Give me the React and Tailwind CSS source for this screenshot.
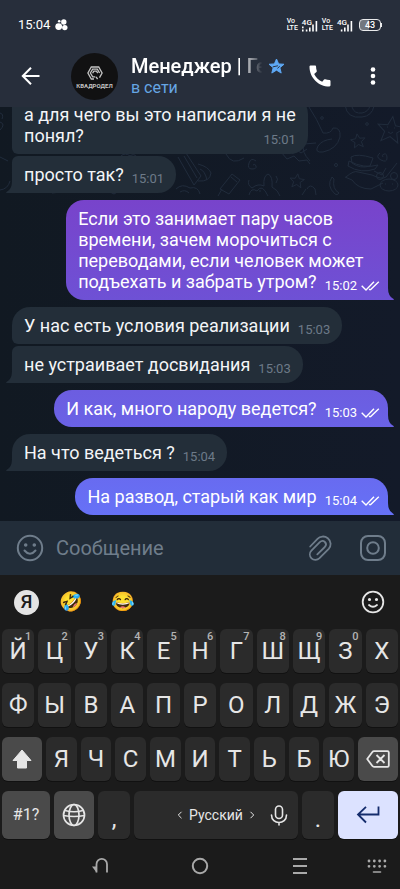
import { MdCall } from "react-icons/md";

const MESSAGES = [
  { id: 1, text: "а для чего вы это написали я не\nпонял?", time: "15:01", first: false, last: false },
  { id: 2, text: "просто так?", time: "15:01", first: false, last: true },
  {
    id: 3,
    text: "Если это занимает пару часов\nвремени, зачем морочиться с\nпереводами, если человек может\nподъехать и забрать утром?",
    time: "15:02",
    own: true,
    fill: "bg-linear-to-b from-[#7843cb] to-[#6e51d5]",
    tail: "text-[#6e51d5]"
  },
  { id: 4, text: "У нас есть условия реализации", time: "15:03", first: true, last: false },
  { id: 5, text: "не устраивает досвидания", time: "15:03", first: false, last: true },
  {
    id: 6,
    text: "И как, много народу ведется?",
    time: "15:03",
    own: true,
    fill: "bg-linear-to-b from-[#6c5de0] to-[#6a62e6]",
    tail: "text-[#6a62e6]"
  },
  { id: 7, text: "На что ведеться ?", time: "15:04", first: true, last: true },
  {
    id: 8,
    text: "На развод, старый как мир",
    time: "15:04",
    own: true,
    fill: "bg-linear-to-b from-[#686bf0] to-[#6671f7]",
    tail: "text-[#6671f7]"
  }
];

const TOP_ROW = [
  ["Й", "1"],
  ["Ц", "2"],
  ["У", "3"],
  ["К", "4"],
  ["Е", "5"],
  ["Н", "6"],
  ["Г", "7"],
  ["Ш", "8"],
  ["Щ", "9"],
  ["З", "0"],
  ["Х", ""]
];
const HOME_ROW = ["Ф", "Ы", "В", "А", "П", "Р", "О", "Л", "Д", "Ж", "Э"];
const BOTTOM_ROW = ["Я", "Ч", "С", "М", "И", "Т", "Ь", "Б", "Ю"];

const STAR = "M0 -8 L2.3 -2.8 L8 -2.4 L3.6 1.3 L5 7 L0 3.9 L-5 7 L-3.6 1.3 L-8 -2.4 L-2.3 -2.8 Z";

function Signal({ dotted }) {
  return (
    <div className="relative h-4 w-4">
      <span className="absolute left-0 top-[2px] text-[8px] font-medium leading-[7px]">4G</span>
      <svg viewBox="0 0 16 16" className="h-4 w-4" fill="currentColor">
        {dotted ? <path d="M0 9.500h1.600v1.800H0zM0 12.600h1.600v1.800H0z" /> : null}
        <path d="M3.800 12.500h1.600v2H3.800zM7 10.500h1.600v4H7zM10.200 7.500h1.600v7h-1.600zM13.600 4h1.600v10.500h-1.600z" />
      </svg>
    </div>
  );
}

function VoLte() {
  return (
    <div className="text-[7px] font-medium leading-[7px]">
      Vo
      <br />
      LTE
    </div>
  );
}

function StatusBar() {
  return (
    <div className="flex h-[50px] items-center pl-[18px] pr-[18px] text-white">
      <span className="text-[13px] leading-4">15:04</span>
      <svg viewBox="0 0 13 12" className="ml-[5px] h-3 w-[13px]" fill="currentColor">
        <circle cx="3.7" cy="7.6" r="3.4" />
        <circle cx="8.8" cy="3" r="2.7" />
        <circle cx="9.8" cy="8.6" r="2.7" />
        <circle cx="4.2" cy="2.2" r="1.3" />
      </svg>
      <div className="ml-auto flex items-center gap-1">
        <VoLte />
        <Signal dotted />
        <VoLte />
        <Signal />
        <div className="ml-[2px] flex items-center">
          <div className="relative h-3 w-[22px] overflow-hidden rounded-[4px] border border-white/90">
            <div className="h-full w-[43%] bg-white/35" />
            <span className="absolute inset-0 text-center text-[9px] font-medium leading-[10px]">43</span>
          </div>
          <div className="h-1 w-px bg-white/90" />
        </div>
      </div>
    </div>
  );
}

function ChatHeader() {
  return (
    <div className="flex h-[57px] items-center pb-[5px] text-white">
      <button type="button" aria-label="Назад" className="flex w-[71px] justify-start pl-[21px]">
        <svg viewBox="0 0 20 20" className="size-5" fill="none" stroke="currentColor" strokeWidth="2">
          <path d="M18.500 10H2M10 1.800 1.800 10l8.200 8.200" />
        </svg>
      </button>
      <div className="flex size-[47px] shrink-0 flex-col items-center justify-center rounded-full bg-[#111112] text-[#c4c4c4]">
        <svg viewBox="0 0 16 14" className="mt-[2px] h-[14px] w-4" fill="none" stroke="currentColor" strokeWidth="1.300">
          <path d="M7 13H4.300L.9 7 4.300 1h7.400l3.400 6-2.600 4.600" />
          <path d="M12.600 7 10.300 3.200H5.700L3.400 7l2.300 3.800h2.600M10.800 7.200 9.400 5.100H6.800L5.600 7.200" />
          <path d="M9 10.800 10.600 13" />
        </svg>
        <span className="mt-[3px] text-[6px] font-bold leading-[6px]">КВАДРОДЕЛ</span>
      </div>
      <div className="ml-[13px] w-[154px] shrink-0">
        <div className="flex items-center">
          <h1 className="w-[134px] whitespace-nowrap text-[20px] font-medium leading-6 [mask-image:linear-gradient(to_right,#000_82%,transparent_98%)]">
            Менеджер | Ге
          </h1>
          <svg viewBox="-8 -8 16 16" className="ml-1 size-[15px] shrink-0">
            <path d={STAR} fill="#5ea9f5" stroke="#5ea9f5" strokeLinejoin="round" />
            <path d="M-4 .4 L1.500 -.8 M1 2 L3.400 -.2" stroke="#272e3b" strokeWidth="1" />
          </svg>
        </div>
        <p className="text-base leading-5 text-[#66a6e4]">в сети</p>
      </div>
      <button type="button" aria-label="Позвонить" className="ml-auto flex w-10 justify-center">
        <MdCall className="size-7" />
      </button>
      <button type="button" aria-label="Меню" className="ml-[6px] flex w-[54px] justify-center">
        <svg viewBox="0 0 6 18" className="h-[18px] w-[6px]" fill="currentColor">
          <circle cx="3" cy="2.500" r="2.300" />
          <circle cx="3" cy="9" r="2.300" />
          <circle cx="3" cy="15.500" r="2.300" />
        </svg>
      </button>
    </div>
  );
}

function Wallpaper() {
  return (
    <svg
      viewBox="0 0 400 89"
      className="absolute right-0 top-0 h-[89px] w-[400px]"
      fill="none"
      stroke="#212c3c"
      strokeWidth="1"
      aria-hidden="true"
    >
      <path d={STAR} transform="translate(391 23) rotate(8) scale(1.7)" strokeWidth=".6" />
      <path d="M387 20h1M394 21h1M388 25q3 3 5 0" />
      <path d={STAR} transform="translate(358 34) rotate(-8) scale(.9)" />
      <path d={STAR} transform="translate(297 74) rotate(6) scale(.9)" />
      <circle cx="322" cy="11" r="1.3" />
      <circle cx="367" cy="17" r="1.3" />
      <circle cx="336" cy="58" r="1.5" />
      <path d="M253 58q2-2 3 1t-4 3-3-6 7-2M383 50q-2-2 1-3t3 4-6 2-1-7" />
      <path d="M345-2q2 14 17 12 10-1 12-11M352 0q2 7 10 6 6-1 8-7" />
      <path d="M309 0q8 12 14 26 8 1 10-5 8-1 7 9-3 12-17 15-9 1-5-6 4-6 14-7M316 36l-12 1q-3 8 6 17M281 45l6 7 7-3 5 5 8-1 3 4M292 47l5-4 4 3 6-4" />
      <path d="M351 50q6-4 22 1l-3 8q-10 3-18-3zM348 59q13 8 27 3l3-4q-14 4-29-4zM346 70q8-7 12-5l14 3q10 5 14 2l11-14M345 70l7 3q6 9 19 9l12-6M374 64l8 4 4-7" />
      <ellipse cx="389" cy="78" rx="9" ry="6" />
      <circle cx="380" cy="69" r="3.500" />
      <circle cx="394" cy="69" r="3.500" />
      <path d="M385 77h1M392 77h1" />
      <path d="M332 70q-6 9 3 17 2 2 4-1-7-4-5-14zM307 82q3-6 8 0l1 6M302 88l4-6" />
      <path d="M249 73q-2 5 3 8 6-5 12-2-1-10 4-12 5 2 4 13 6 3 8 9M276 69q3 3 0 7M249 88q2-8 8-4 5-8 11 5M259 84h2" />
      <path d="M232 67l8 6-11 14-9-5zM218 89l4-7M231 70l6 5" />
      <path d="M198 57q11 3 13 9-1 9-13 8M200 62q5 2 7 11M226 47q6 12 18 4M219 38l8 6 12-4" />
      <path d="M0 15q6 2 0 8M0 6q4 1 2 6M0 50l8 4M10 74q-2 8-10 9" />
      <path d="M178 50l16 28 7-9-15-23M184 49l13 22M176 82q6-6 14-1 8-2 10 6M180 85q5-3 9 1M43 83l5-4 4 7 9-1M75 84q6-8 14 0M108 84l6 3 8-5M121 49q4-4 9 0 4-3 7 1" />
    </svg>
  );
}

function Tail({ own, className }) {
  return (
    <svg
      viewBox="0 0 7 12"
      className={`absolute bottom-0 h-3 w-[7px] ${own ? "-right-[6px] -scale-x-100" : "-left-[6px]"} ${className}`}
      fill="currentColor"
    >
      <path d="M6 0h1v12H.6Q-.4 11.400 .8 10.800 6 8 6 0Z" />
    </svg>
  );
}

function ReadMark() {
  return (
    <svg viewBox="0 0 19 10" className="ml-1 h-[10px] w-[19px]" fill="none" stroke="currentColor" strokeWidth="1.400">
      <path d="M.7 4.800 5 9 13 .8M9.200 9 17.800 .8M8.200 8l1 1" />
    </svg>
  );
}

function Bubble({ message }) {
  const { text, time, own, first, last, fill, tail } = message;

  const shape = own
    ? `self-end rounded-[18px] rounded-br-none pl-3 pr-2 text-white ${fill}`
    : `self-start rounded-r-[18px] bg-[#232e39] px-3 text-[#f3f5f7] ${first ? "rounded-tl-[18px]" : "rounded-tl-md"} ${
        last ? "rounded-bl-none" : "rounded-bl-md"
      }`;

  return (
    <div className={`relative py-2 ${shape} ${!own && !last ? "mb-[2px]" : "mb-[7px] last:mb-0"}`}>
      <p className="whitespace-pre-line text-[18px] leading-[21px]">
        {text}
        <span
          className={`float-right ml-2 mt-[9px] flex h-3 items-center text-[13px] leading-3 ${
            own ? "text-white" : "text-[#6d7a88]"
          }`}
        >
          {time}
          {own ? <ReadMark /> : null}
        </span>
      </p>
      {own || last ? <Tail own={own} className={own ? tail : "text-[#232e39]"} /> : null}
    </div>
  );
}

function Composer() {
  return (
    <div className="flex h-[54px] shrink-0 items-center bg-[#222d39] pl-4 pr-[13px] text-[#6f7d8b]">
      <button type="button" aria-label="Эмодзи">
        <svg viewBox="0 0 28 28" className="size-7" fill="none" stroke="currentColor" strokeWidth="2" strokeLinecap="round">
          <circle cx="14" cy="14" r="12.200" />
          <path d="M8.500 16.500q5.500 6.500 11 0" />
          <circle cx="9.700" cy="11" r=".8" fill="currentColor" />
          <circle cx="18.300" cy="11" r=".8" fill="currentColor" />
        </svg>
      </button>
      <input
        type="text"
        aria-label="Сообщение"
        placeholder="Сообщение"
        className="ml-3 min-w-0 flex-1 bg-transparent text-[20px] leading-6 text-white outline-none placeholder:text-[#6f7d8b]"
      />
      <button type="button" aria-label="Прикрепить файл">
        <svg viewBox="0 0 24 26" className="h-[26px] w-6" fill="none" stroke="currentColor" strokeWidth="1.800" strokeLinecap="round">
          <path d="M2.200 11.500 9.500 3.800C12 1.200 16.500.6 19.800 3.200 23.500 6.300 23.300 11 20.700 13.800L11.500 23.200C9.300 25.300 5.700 25.500 3.500 23.300 1.300 21.100 1.400 17.800 3.400 15.700L11.800 7.200C13.300 5.700 15.500 5.700 16.900 7 18.300 8.400 18.200 10.500 16.800 12L9.300 19.400" />
        </svg>
      </button>
      <button type="button" aria-label="Камера" className="ml-[27px]">
        <svg viewBox="0 0 28 28" className="size-7" fill="none" stroke="currentColor" strokeWidth="2">
          <rect x="2" y="2" width="24" height="24" rx="7" />
          <circle cx="14" cy="14" r="5.800" />
        </svg>
      </button>
    </div>
  );
}

function Key({ className = "", tone = "bg-[#2b2b2b]", label, children }) {
  return (
    <button
      type="button"
      aria-label={label}
      className={`relative flex h-full min-w-0 items-center justify-center rounded-md text-[#e6e6e6] shadow-[0_1px_0_#111111] ${tone} ${className}`}
    >
      {children}
    </button>
  );
}

function LetterKey({ letter, hint }) {
  return (
    <Key className="flex-1 text-2xl">
      {letter}
      {hint ? (
        <span className="absolute right-[3px] top-[2px] text-[11px] font-medium leading-3 text-[#b4b4b4]">{hint}</span>
      ) : null}
    </Key>
  );
}

function Keyboard() {
  return (
    <div className="shrink-0 bg-[#1b1b1b]">
      <div className="flex h-[54px] items-center pl-[14px] pr-[15px]">
        <button
          type="button"
          className="flex size-[25px] items-center justify-center rounded-full bg-[#e4e4e4] text-[19px] font-medium leading-5 text-[#1b1b1b]"
        >
          Я
        </button>
        <button type="button" className="ml-[18px] w-7 text-center font-['Noto_Color_Emoji',sans-serif] text-[19px] leading-6">
          🤣
        </button>
        <button type="button" className="ml-6 w-7 text-center font-['Noto_Color_Emoji',sans-serif] text-[19px] leading-6">
          😂
        </button>
        <button type="button" aria-label="Смайлы" className="ml-auto text-[#e6e6e6]">
          <svg viewBox="0 0 24 24" className="size-6" fill="none" stroke="currentColor" strokeWidth="1.800" strokeLinecap="round">
            <circle cx="12" cy="12" r="10.300" />
            <path d="M8 15q4 3.600 8 0" />
            <circle cx="8.500" cy="9.500" r=".7" fill="currentColor" />
            <circle cx="15.500" cy="9.500" r=".7" fill="currentColor" />
          </svg>
        </button>
      </div>

      <div className="flex flex-col gap-[10px] px-[2px]">
        <div className="flex h-11 gap-1">
          {TOP_ROW.map(([letter, hint]) => (
            <LetterKey key={letter} letter={letter} hint={hint} />
          ))}
        </div>
        <div className="flex h-11 gap-1">
          {HOME_ROW.map((letter) => (
            <LetterKey key={letter} letter={letter} />
          ))}
        </div>
        <div className="flex h-11 gap-1">
          <Key className="w-10" tone="bg-[#4a4a4a]" label="Shift">
            <svg viewBox="0 0 20 20" className="size-5" fill="currentColor" stroke="currentColor" strokeLinejoin="round">
              <path d="M10 1 19 11.500h-4.500v7.500h-9v-7.500H1z" />
            </svg>
          </Key>
          {BOTTOM_ROW.map((letter) => (
            <LetterKey key={letter} letter={letter} />
          ))}
          <Key className="w-10" tone="bg-[#4a4a4a]" label="Удалить">
            <svg viewBox="0 0 24 18" className="h-[18px] w-6" fill="none" stroke="currentColor" strokeWidth="1.800" strokeLinejoin="round">
              <path d="M8 1.200h13.500a1.300 1.300 0 0 1 1.300 1.300v13a1.300 1.300 0 0 1-1.300 1.300H8q-1 0-1.600-.8L1.200 9l5.200-7q.6-.8 1.600-.8zM10.500 5l8 8M18.500 5l-8 8" />
            </svg>
          </Key>
        </div>
        <div className="flex h-12 gap-1">
          <Key className="w-12 text-base" tone="bg-[#4a4a4a]">
            #1?
          </Key>
          <Key className="w-10" tone="bg-[#4a4a4a]" label="Язык">
            <svg viewBox="0 0 24 24" className="size-6" fill="none" stroke="currentColor" strokeWidth="1.700">
              <circle cx="12" cy="12" r="10.500" />
              <ellipse cx="12" cy="12" rx="5" ry="10.500" />
              <path d="M1.500 12.500Q12 14.500 22.500 12.500M3 7.500Q12 10 21 7.500" strokeWidth="1.500" />
            </svg>
          </Key>
          <Key className="w-8 pt-2 text-2xl">,</Key>
          <Key className="flex-1 text-sm" label="Русский">
            <span className="flex w-full items-center pl-[43px] pr-[10px]">
              <svg viewBox="0 0 6 8" className="h-2 w-[6px]" fill="none" stroke="currentColor">
                <path d="M4.500 .8 1.300 4l3.200 3.200" />
              </svg>
              <span className="mx-1.5">Русский</span>
              <svg viewBox="0 0 6 8" className="h-2 w-[6px]" fill="none" stroke="currentColor">
                <path d="M1.500 .8 4.700 4 1.500 7.200" />
              </svg>
              <svg
                viewBox="0 0 18 21"
                className="ml-auto h-[21px] w-[18px]"
                fill="none"
                stroke="currentColor"
                strokeWidth="1.600"
                strokeLinecap="round"
              >
                <rect x="5.500" y="1" width="7" height="12.500" rx="3.500" />
                <path d="M1.500 10c0 10 15 10 15 0M9 17.500V20" />
              </svg>
            </span>
          </Key>
          <Key className="w-8 pt-2 text-2xl">.</Key>
          <Key className="w-[60px]" tone="bg-[#dce2ff]" label="Ввод">
            <svg viewBox="0 0 24 20" className="h-5 w-6" fill="none" stroke="#142c6c" strokeWidth="1.800">
              <path d="M22.500 1.500v8H2.500M10 1.800 2 9.500l8 8" />
            </svg>
          </Key>
        </div>
      </div>

      <nav className="grid h-[50px] grid-cols-8 items-center pt-1 text-[#a9a9a9]">
        <button type="button" aria-label="Назад" className="col-span-2 col-start-2 flex justify-center">
          <svg viewBox="0 0 18 18" className="size-[18px]" fill="none" stroke="currentColor" strokeWidth="1.800">
            <path d="M16 15.500V7.200a5.200 5.200 0 0 0-10.500 0v8.300" />
            <path d="M5.500 9.500v6L1 9.500z" fill="currentColor" stroke="none" />
          </svg>
        </button>
        <button type="button" aria-label="Домой" className="col-span-2 flex justify-center">
          <svg viewBox="0 0 18 18" className="size-[18px]" fill="none" stroke="currentColor" strokeWidth="2">
            <circle cx="9" cy="9" r="7.200" />
          </svg>
        </button>
        <button type="button" aria-label="Недавние" className="col-span-2 flex justify-center">
          <svg viewBox="0 0 16 18" className="h-[18px] w-4" fill="none" stroke="currentColor" strokeWidth="2">
            <path d="M1 2h14M1 9h14M1 16h14" />
          </svg>
        </button>
        <button type="button" aria-label="Скрыть клавиатуру" className="flex justify-center">
          <svg viewBox="0 0 20 16" className="ml-1 h-4 w-5" fill="none" stroke="currentColor" strokeWidth="2.800" strokeLinecap="round">
            <path d="M2 3h.01M7.300 3h.01M12.600 3h.01M17.900 3h.01M2 8.300h.01M7.300 8.300h.01M12.600 8.300h.01M17.900 8.300h.01" />
            <path d="M6.500 14h7" strokeWidth="1.600" />
          </svg>
        </button>
      </nav>
    </div>
  );
}

export default function App() {
  return (
    <div className="flex h-screen flex-col bg-[#1b1b1b] font-['Roboto',sans-serif]">
      <header className="relative z-10 shrink-0 bg-[#272e3b]">
        <StatusBar />
        <ChatHeader />
      </header>
      <main className="relative flex min-h-0 flex-1 flex-col justify-end overflow-hidden bg-linear-to-r from-[#111922] to-[#131a29] px-3 pb-[6px]">
        <Wallpaper />
        <div className="relative flex flex-col">
          {MESSAGES.map((message) => (
            <Bubble key={message.id} message={message} />
          ))}
        </div>
      </main>
      <Composer />
      <Keyboard />
    </div>
  );
}
